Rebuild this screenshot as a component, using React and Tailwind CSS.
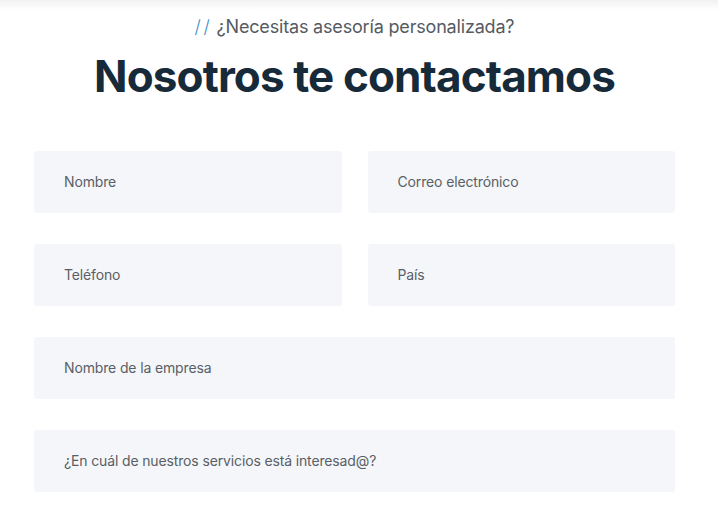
const Field = ({ label, wide }) => (
  <div
    className={`h-[62px] flex items-center pl-[30px] pb-[1px] bg-[#f4f6f9] rounded-[3px] text-[14px] text-[#5a5f66] tracking-[-0.01em] ${wide ? "col-span-2" : ""}`}
  >
    {label}
  </div>
);

export default function App() {
  return (
    <div className="w-[718px] h-[511px] bg-white overflow-hidden font-['Inter',sans-serif]">
      <div className="h-[10px] bg-gradient-to-b from-[#f2f2f2] to-white" />
      <div className="w-[709px]">
        <div className="text-center text-[18px] text-[#555b63] leading-none mt-[8px] tracking-[-0.01em]">
          <span className="text-[#3d8fd0] font-light tracking-[0.15em] mr-[4px]">//</span>¿Necesitas asesoría personalizada?
        </div>
        <h1 className="text-center text-[44px] font-bold text-[#172a3a] tracking-[-0.02em] leading-none mt-[18px]">
          Nosotros te contactamos
        </h1>
        <div className="grid grid-cols-2 gap-x-[26px] gap-y-[31px] px-[34px] mt-[53px]">
          <Field label="Nombre" />
          <Field label="Correo electrónico" />
          <Field label="Teléfono" />
          <Field label="País" />
          <Field label="Nombre de la empresa" wide />
          <Field label="¿En cuál de nuestros servicios está interesad@?" wide />
        </div>
      </div>
    </div>
  );
}
